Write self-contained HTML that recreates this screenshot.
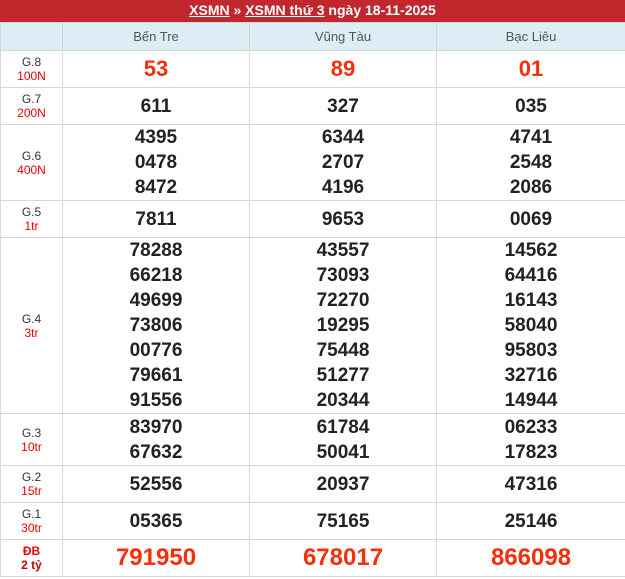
<!DOCTYPE html>
<html><head><meta charset="utf-8"><style>
*{margin:0;padding:0;box-sizing:border-box}
body{width:625px;height:579px;background:#fff;font-family:"Liberation Sans",Arial,sans-serif;overflow:hidden}
.h{height:22px;background:#c1272d;color:#fff;text-align:center;font-weight:bold;font-size:14px;line-height:20px}
.h u{color:#fff}
table{border-collapse:collapse;width:625px;table-layout:fixed}
td{border:1px solid #d6d6d6;text-align:center;vertical-align:middle;padding:0}
tr.t td{background:#dcedf5;color:#555;font-size:13px;height:28px}
td.l{font-size:12px;color:#333;line-height:14px}
td.l span{color:#e00;display:block}
td.n{font-weight:bold;font-size:19px;color:#222;line-height:25px}
td.r{font-weight:bold;color:#f4300c;font-size:22px}
td.d{font-weight:bold;color:#f4300c;font-size:24px}
</style></head><body>
<div class="h"><u>XSMN</u> » <u>XSMN thứ 3</u> ngày 18-11-2025</div>
<table>
<col style="width:62px"><col style="width:187px"><col style="width:187px"><col style="width:189px">
<tr class="t"><td></td><td>Bến Tre</td><td>Vũng Tàu</td><td>Bạc Liêu</td></tr>
<tr style="height:37px"><td class="l">G.8<span>100N</span></td><td class="r">53</td><td class="r">89</td><td class="r">01</td></tr>
<tr style="height:37px"><td class="l">G.7<span>200N</span></td><td class="n">611</td><td class="n">327</td><td class="n">035</td></tr>
<tr style="height:76px"><td class="l">G.6<span>400N</span></td><td class="n">4395<br>0478<br>8472</td><td class="n">6344<br>2707<br>4196</td><td class="n">4741<br>2548<br>2086</td></tr>
<tr style="height:37px"><td class="l">G.5<span>1tr</span></td><td class="n">7811</td><td class="n">9653</td><td class="n">0069</td></tr>
<tr style="height:176px"><td class="l">G.4<span>3tr</span></td><td class="n">78288<br>66218<br>49699<br>73806<br>00776<br>79661<br>91556</td><td class="n">43557<br>73093<br>72270<br>19295<br>75448<br>51277<br>20344</td><td class="n">14562<br>64416<br>16143<br>58040<br>95803<br>32716<br>14944</td></tr>
<tr style="height:52px"><td class="l">G.3<span>10tr</span></td><td class="n">83970<br>67632</td><td class="n">61784<br>50041</td><td class="n">06233<br>17823</td></tr>
<tr style="height:37px"><td class="l">G.2<span>15tr</span></td><td class="n">52556</td><td class="n">20937</td><td class="n">47316</td></tr>
<tr style="height:37px"><td class="l">G.1<span>30tr</span></td><td class="n">05365</td><td class="n">75165</td><td class="n">25146</td></tr>
<tr style="height:37px"><td class="l" style="color:#e00;font-weight:bold">ĐB<span style="color:#c00">2 tỷ</span></td><td class="d">791950</td><td class="d">678017</td><td class="d">866098</td></tr>
</table>
</body></html>
